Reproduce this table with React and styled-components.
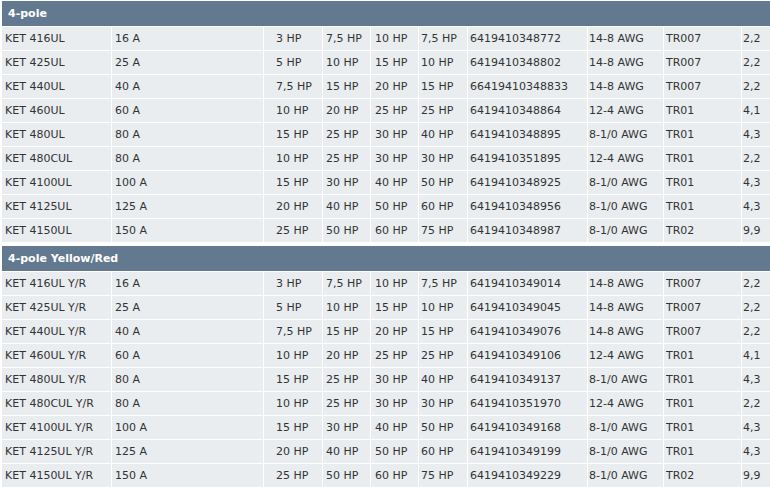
import styled, { createGlobalStyle } from 'styled-components';

const GlobalStyle = createGlobalStyle`
  html, body {
    margin: 0;
    padding: 0;
    overflow: hidden;
    background: #fff;
  }
  body {
    font-family: "DejaVu Sans", Verdana, sans-serif;
    font-size: 11px;
    color: #333;
  }
`;

const columns = [
  { width: 109, pad: 3 },
  { width: 151, pad: 3 },
  { width: 58, pad: 12 },
  { width: 47, pad: 3 },
  { width: 47, pad: 4 },
  { width: 48, pad: 2 },
  { width: 119, pad: 2 },
  { width: 75, pad: 1 },
  { width: 77, pad: 2 },
  { width: null, pad: 1 },
];

const sections = [
  {
    title: '4-pole',
    rows: [
      ['KET 416UL', '16 A', '3 HP', '7,5 HP', '10 HP', '7,5 HP', '6419410348772', '14-8 AWG', 'TR007', '2,2'],
      ['KET 425UL', '25 A', '5 HP', '10 HP', '15 HP', '10 HP', '6419410348802', '14-8 AWG', 'TR007', '2,2'],
      ['KET 440UL', '40 A', '7,5 HP', '15 HP', '20 HP', '15 HP', '66419410348833', '14-8 AWG', 'TR007', '2,2'],
      ['KET 460UL', '60 A', '10 HP', '20 HP', '25 HP', '25 HP', '6419410348864', '12-4 AWG', 'TR01', '4,1'],
      ['KET 480UL', '80 A', '15 HP', '25 HP', '30 HP', '40 HP', '6419410348895', '8-1/0 AWG', 'TR01', '4,3'],
      ['KET 480CUL', '80 A', '10 HP', '25 HP', '30 HP', '30 HP', '6419410351895', '12-4 AWG', 'TR01', '2,2'],
      ['KET 4100UL', '100 A', '15 HP', '30 HP', '40 HP', '50 HP', '6419410348925', '8-1/0 AWG', 'TR01', '4,3'],
      ['KET 4125UL', '125 A', '20 HP', '40 HP', '50 HP', '60 HP', '6419410348956', '8-1/0 AWG', 'TR01', '4,3'],
      ['KET 4150UL', '150 A', '25 HP', '50 HP', '60 HP', '75 HP', '6419410348987', '8-1/0 AWG', 'TR02', '9,9'],
    ],
  },
  {
    title: '4-pole Yellow/Red',
    rows: [
      ['KET 416UL Y/R', '16 A', '3 HP', '7,5 HP', '10 HP', '7,5 HP', '6419410349014', '14-8 AWG', 'TR007', '2,2'],
      ['KET 425UL Y/R', '25 A', '5 HP', '10 HP', '15 HP', '10 HP', '6419410349045', '14-8 AWG', 'TR007', '2,2'],
      ['KET 440UL Y/R', '40 A', '7,5 HP', '15 HP', '20 HP', '15 HP', '6419410349076', '14-8 AWG', 'TR007', '2,2'],
      ['KET 460UL Y/R', '60 A', '10 HP', '20 HP', '25 HP', '25 HP', '6419410349106', '12-4 AWG', 'TR01', '4,1'],
      ['KET 480UL Y/R', '80 A', '15 HP', '25 HP', '30 HP', '40 HP', '6419410349137', '8-1/0 AWG', 'TR01', '4,3'],
      ['KET 480CUL Y/R', '80 A', '10 HP', '25 HP', '30 HP', '30 HP', '6419410351970', '12-4 AWG', 'TR01', '2,2'],
      ['KET 4100UL Y/R', '100 A', '15 HP', '30 HP', '40 HP', '50 HP', '6419410349168', '8-1/0 AWG', 'TR01', '4,3'],
      ['KET 4125UL Y/R', '125 A', '20 HP', '40 HP', '50 HP', '60 HP', '6419410349199', '8-1/0 AWG', 'TR01', '4,3'],
      ['KET 4150UL Y/R', '150 A', '25 HP', '50 HP', '60 HP', '75 HP', '6419410349229', '8-1/0 AWG', 'TR02', '9,9'],
    ],
  },
];

export default function App() {
  return (
    <>
      <GlobalStyle />
      <Page>
        {sections.map((section) => (
          <Section key={section.title}>
            <TitleBar>{section.title}</TitleBar>
            {section.rows.map((row) => (
              <Row key={row[0]}>
                {row.map((value, i) => (
                  <Cell key={i} $pad={columns[i].pad}>
                    {value}
                  </Cell>
                ))}
              </Row>
            ))}
          </Section>
        ))}
      </Page>
    </>
  );
}

const Page = styled.div`
  display: flex;
  flex-direction: column;
  gap: 4px;
  padding: 1px 0 0 2px;
`;

const Section = styled.div`
  display: flex;
  flex-direction: column;
  gap: 1px;
`;

const TitleBar = styled.div`
  height: 25px;
  line-height: 25px;
  padding-left: 6px;
  background: #62798f;
  color: #fff;
  font-weight: bold;
  font-size: 11px;
`;

const Row = styled.div`
  display: grid;
  grid-template-columns: ${columns.map((c) => (c.width ? `${c.width}px` : 'minmax(0, 1fr)')).join(' ')};
  column-gap: 1px;
  height: 23px;
`;

const Cell = styled.div`
  background: #e9edf0;
  line-height: 23px;
  padding-left: ${(p) => p.$pad}px;
  white-space: nowrap;
  overflow: hidden;
`;
